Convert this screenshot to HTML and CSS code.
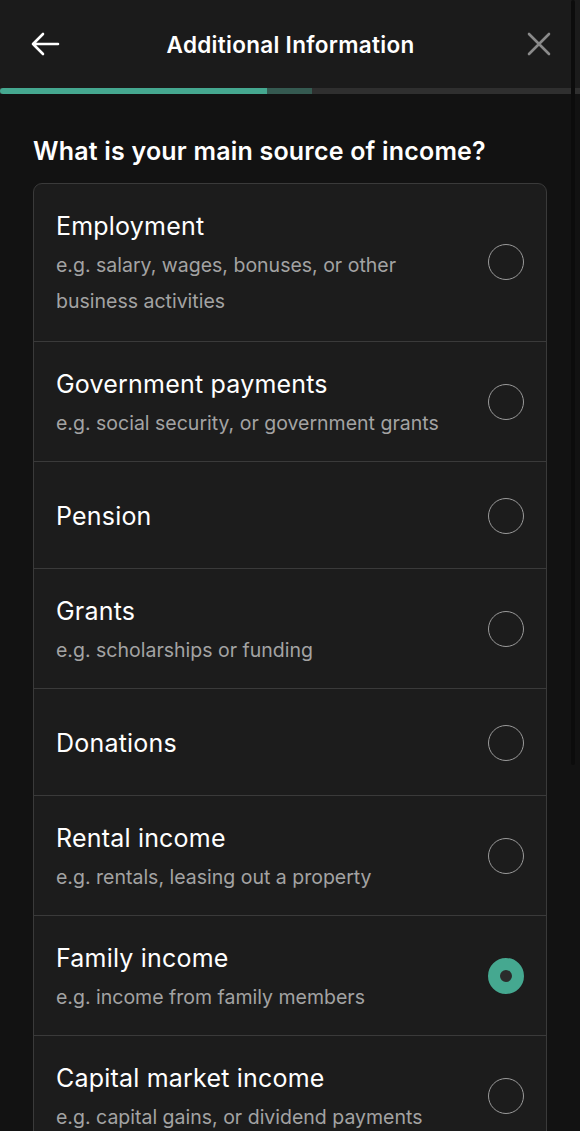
FILE: index.html
```html
<!DOCTYPE html>
<html lang="en">
<head>
<meta charset="utf-8">
<title>Additional Information</title>
<link rel="stylesheet" href="styles.css">
</head>
<body>
<div class="screen">
  <header class="topbar">
    <button class="icon-btn back" aria-label="Back">
      <svg width="30" height="24" viewBox="0 0 30 24"><path d="M28 12H3M13 2L3 12l10 10" fill="none" stroke="#fff" stroke-width="2.6" stroke-linecap="round" stroke-linejoin="round"/></svg>
    </button>
    <h1 class="title">Additional Information</h1>
    <button class="icon-btn close" aria-label="Close">
      <svg width="24" height="24" viewBox="0 0 24 24"><path d="M2 2L22 22M22 2L2 22" fill="none" stroke="#8a8a8a" stroke-width="2.6" stroke-linecap="round"/></svg>
    </button>
  </header>
  <div class="progress">
    <div class="progress-done"></div>
    <div class="progress-part"></div>
  </div>
  <main class="content">
    <h2 class="question">What is your main source of income?</h2>
    <div class="options">
      <label class="option option-tall">
        <div class="text"><div class="name">Employment</div><div class="desc">e.g. salary, wages, bonuses, or other business activities</div></div>
        <span class="radio"></span>
      </label>
      <label class="option">
        <div class="text"><div class="name">Government payments</div><div class="desc">e.g. social security, or government grants</div></div>
        <span class="radio"></span>
      </label>
      <label class="option">
        <div class="text"><div class="name">Pension</div></div>
        <span class="radio"></span>
      </label>
      <label class="option">
        <div class="text"><div class="name">Grants</div><div class="desc">e.g. scholarships or funding</div></div>
        <span class="radio"></span>
      </label>
      <label class="option">
        <div class="text"><div class="name">Donations</div></div>
        <span class="radio"></span>
      </label>
      <label class="option">
        <div class="text"><div class="name">Rental income</div><div class="desc">e.g. rentals, leasing out a property</div></div>
        <span class="radio"></span>
      </label>
      <label class="option">
        <div class="text"><div class="name">Family income</div><div class="desc">e.g. income from family members</div></div>
        <span class="radio checked"></span>
      </label>
      <label class="option">
        <div class="text"><div class="name">Capital market income</div><div class="desc">e.g. capital gains, or dividend payments</div></div>
        <span class="radio"></span>
      </label>
    </div>
  </main>
  <div class="scrollbar"></div>
</div>
</body>
</html>
```
FILE: styles.css
```css
* { box-sizing: border-box; }
html, body { margin: 0; padding: 0; background: #121212; }
body {
  font-family: Inter, "Noto Sans", sans-serif;
  color: #fff;
  width: 580px;
  height: 1131px;
  overflow: hidden;
}
.screen { position: relative; height: 1131px; overflow: hidden; }
.topbar {
  height: 88px;
  background: #1b1b1b;
  display: flex;
  align-items: center;
  justify-content: space-between;
  padding: 0 29px 0 30px;
}
.icon-btn {
  background: none;
  border: 0;
  padding: 0;
  width: 30px;
  height: 24px;
  display: flex;
  align-items: center;
  justify-content: center;
}
.close { width: 24px; }
.title {
  margin: 0;
  font-size: 22.5px;
  font-weight: 600;
  letter-spacing: 0.3px;
  margin-left: -6px;
}
.progress {
  height: 6px;
  background: #2f2f2f;
  display: flex;
}
.progress-done { width: 267px; background: #45a890; border-radius: 3px 0 0 3px; }
.progress-part { width: 45px; background: #355a51; }
.content { padding: 0 33px 0 33px; }
.question {
  margin: 0;
  padding: 40px 0 15px;
  font-size: 25px;
  font-weight: 600;
  line-height: 34px;
  letter-spacing: 0.2px;
}
.options {
  background: #1c1c1c;
  border: 1px solid #3a3a3a;
  border-radius: 9px;
  overflow: hidden;
}
.option {
  display: flex;
  align-items: center;
  justify-content: space-between;
  min-height: 107px;
  padding: 21px 22px 20px 22px;
  border-bottom: 1px solid #3a3a3a;
}
.option-tall { padding-bottom: 22px; }
.text { flex: 1; max-width: 405px; }
.name {
  font-size: 25px;
  line-height: 42px;
  font-weight: 400;
  letter-spacing: 0.2px;
}
.desc {
  font-size: 19.5px;
  line-height: 36px;
  color: #a3a3a3;
}
.radio {
  width: 36px;
  height: 36px;
  border-radius: 50%;
  border: 1.5px solid #9a9a9a;
  flex: none;
}
.radio.checked {
  border: 12.5px solid #45a890;
  background: #2b2b2b;
}
.scrollbar {
  position: absolute;
  top: 0;
  right: 5px;
  width: 4px;
  height: 765px;
  background: #0c0c0c;
  border-radius: 2px;
}
```
